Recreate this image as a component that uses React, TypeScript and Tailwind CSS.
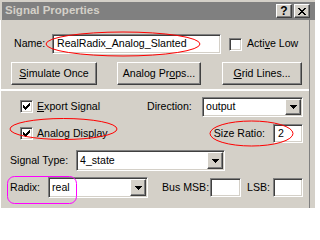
import React from "react"

const sunken =
  "border border-[#808080] border-b-white border-r-white shadow-[inset_1px_1px_0_#404040,inset_-1px_-1px_0_#d4d0c8]"
const raised =
  "border border-white border-b-[#404040] border-r-[#404040] shadow-[inset_-1px_-1px_0_#808080]"

function Check({ checked }: { checked?: boolean }) {
  return (
    <div className={`w-[13px] h-[13px] bg-white shrink-0 flex items-center justify-center ${sunken}`}>
      {checked && (
        <svg width="7" height="7" viewBox="0 0 7 7" shapeRendering="crispEdges">
          <path d="M6 0h1v3h-1zM5 1h1v3h-1zM4 2h1v3h-1zM3 3h1v3h-1zM2 4h1v3h-1zM1 3h1v3h-1zM0 2h1v3h-1z" fill="#000" />
        </svg>
      )}
    </div>
  )
}

function Arrow() {
  return (
    <div className={`w-[16px] h-full shrink-0 bg-[#d4d0c8] flex items-center justify-center ${raised}`}>
      <svg width="7" height="4" viewBox="0 0 7 4" shapeRendering="crispEdges">
        <path d="M0 0h7v1h-1v1h-1v1h-1v1h-1v-1h-1v-1h-1v-1h-1z" fill="#000" />
      </svg>
    </div>
  )
}

function Select({ value, className }: { value: string; className: string }) {
  return (
    <div className={`bg-white flex items-stretch p-[1px] shrink-0 ${sunken} ${className}`}>
      <span className="flex-1 flex items-center pl-[2px]">{value}</span>
      <Arrow />
    </div>
  )
}

function Btn({ children, className }: { children: React.ReactNode; className: string }) {
  return (
    <div className={`h-[23px] shrink-0 flex items-center justify-center bg-[#d4d0c8] ${raised} ${className}`}>
      {children}
    </div>
  )
}

export default function App() {
  return (
    <div className="relative w-[315px] h-[208px] overflow-hidden whitespace-nowrap bg-[#d4d0c8] text-[10.6px] text-black font-['Liberation_Sans',Arial,sans-serif] flex flex-col">
      {/* title bar */}
      <div className="pt-[2px] pl-[2px]">
        <div className="h-[18px] bg-[#808080] flex items-center pl-[3px] pr-[5px]">
          <span className="font-bold text-[#d4d0c8] text-[11.5px]">Signal Properties</span>
          <div className={`ml-auto w-[16px] h-[14px] flex items-center justify-center bg-[#d4d0c8] font-bold text-[12px] ${raised}`}>
            ?
          </div>
          <div className={`ml-[2px] w-[16px] h-[14px] flex items-center justify-center bg-[#d4d0c8] ${raised}`}>
            <svg width="8" height="7" viewBox="0 0 8 7" shapeRendering="crispEdges">
              <path d="M0 0h2v1h-2zM6 0h2v1h-2zM1 1h2v1h-2zM5 1h2v1h-2zM2 2h4v1h-4zM3 3h2v1h-2zM2 4h4v1h-4zM1 5h2v1h-2zM5 5h2v1h-2zM0 6h2v1h-2zM6 6h2v1h-2z" fill="#000" />
            </svg>
          </div>
        </div>
      </div>

      <div className="flex-1 w-[310px] border-l border-white border-r border-r-[#808080] flex flex-col">
        {/* top panel */}
        <div className="h-[69px]">
          <div className="flex items-center mt-[14px] pl-[13px] h-[20px]">
            <span className="w-[38px] shrink-0">Name:</span>
            <div className={`w-[169px] h-[20px] shrink-0 bg-white flex items-center pl-[4px] ${sunken}`}>
              RealRadix_Analog_Slanted
            </div>
            <div className="ml-[8px]">
              <Check />
            </div>
            <span className="ml-[5px]">
              Acti<u>v</u>e Low
            </span>
          </div>
          <div className="flex mt-[8px] pl-[10px]">
            <Btn className="w-[86px]">
              <u>S</u>imulate Once
            </Btn>
            <Btn className="w-[84px] ml-[20px]">
              Analog Pr<u>o</u>ps...
            </Btn>
            <Btn className="w-[80px] ml-[21px]">
              <u>G</u>rid Lines...
            </Btn>
          </div>
        </div>

        <div className="h-[2px] bg-white" />

        {/* lower panel */}
        <div className="flex-1 flex flex-col pr-[6px]">
          <div className="flex items-center mt-[6px] h-[20px]">
            <div className="w-[146px] shrink-0 pl-[19px] flex items-center">
              <Check checked />
              <span className="ml-[4px]">
                <u>E</u>xport Signal
              </span>
            </div>
            <span className="w-[55px] shrink-0">Direction:</span>
            <Select value="output" className="w-[101px] h-[20px]" />
          </div>

          <div className="flex items-center mt-[7px] h-[19px]">
            <div className="pl-[19px] flex items-center">
              <Check checked />
              <span className="ml-[4px]">Analog Display</span>
            </div>
            <span className="ml-auto mr-[8px]">Size Ratio:</span>
            <div className={`w-[30px] h-[19px] shrink-0 bg-white flex items-center pl-[4px] ${sunken}`}>2</div>
          </div>

          <div className="flex items-center mt-[7px] h-[21px] pl-[9px]">
            <span className="w-[66px] shrink-0">Signal Type:</span>
            <Select value="4_state" className="w-[149px] h-[21px]" />
          </div>

          <div className="flex items-center mt-[6px] h-[21px] pl-[9px]">
            <span className="w-[38px] shrink-0">Radix:</span>
            <Select value="real" className="w-[100px] h-[21px]" />
            <span className="ml-[14px] w-[48px] shrink-0">Bus MSB:</span>
            <div className={`w-[31px] h-[19px] shrink-0 bg-white ${sunken}`} />
            <span className="ml-[6px] w-[26px] shrink-0">LSB:</span>
            <div className={`w-[30px] h-[19px] shrink-0 bg-white ${sunken}`} />
          </div>
        </div>
      </div>

      {/* annotations drawn over the dialog */}
      <svg className="absolute inset-0 pointer-events-none" width="315" height="208" viewBox="0 0 315 208">
        <ellipse cx="123" cy="44" rx="77" ry="12" fill="none" stroke="#ff0000" strokeWidth="1" />
        <ellipse cx="63.5" cy="129" rx="53.5" ry="10.5" fill="none" stroke="#ff0000" strokeWidth="1" />
        <ellipse cx="251.5" cy="133.5" rx="41.5" ry="12.5" fill="none" stroke="#ff0000" strokeWidth="1" />
        <rect x="7.5" y="176.5" width="69" height="27" rx="7" fill="none" stroke="#ff00ff" strokeWidth="1" />
      </svg>
    </div>
  )
}
